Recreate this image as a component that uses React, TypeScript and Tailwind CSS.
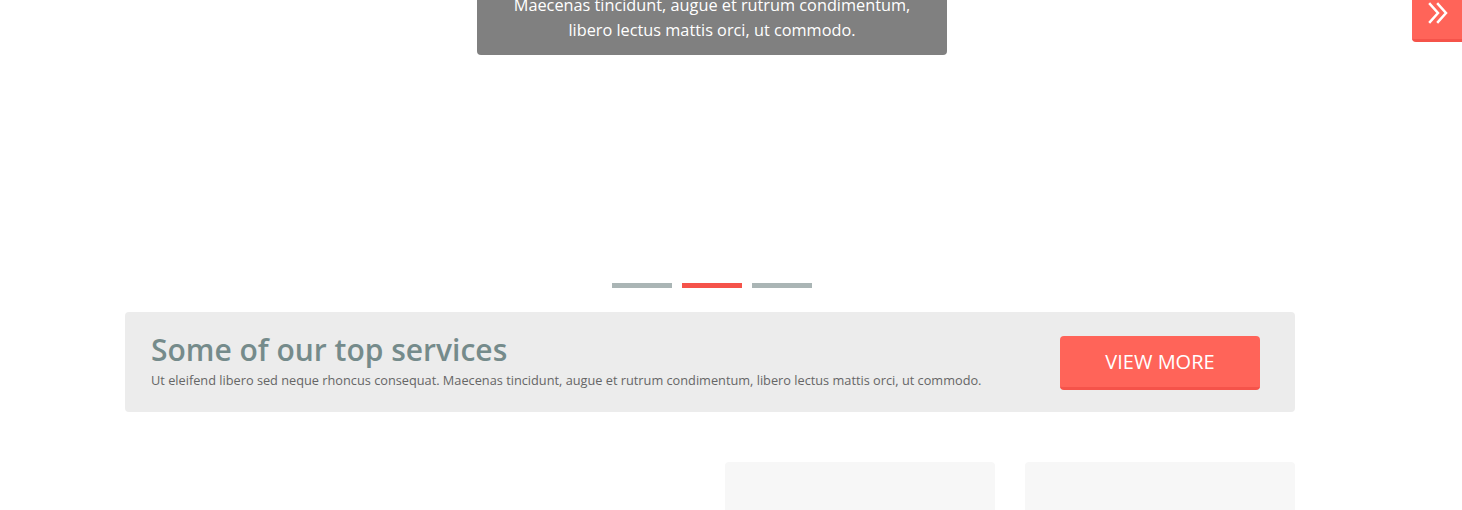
import React from "react";

export default function App() {
  return (
    <div className="relative w-[1462px] h-[510px] overflow-hidden bg-white" style={{ fontFamily: "'Open Sans', 'Noto Sans', sans-serif" }}>
      {/* side toggle */}
      <div className="absolute right-0 top-0 w-[50px] h-[42px] bg-[#ff6459] border-b-[3px] border-[#f5534a] rounded-bl-[4px]">
        <svg width="22" height="22" viewBox="0 0 22 22" fill="none" stroke="white" strokeWidth="2.5" strokeLinecap="square" className="absolute left-[15px] top-[2px]">
          <path d="M3 2l8 9-8 9" />
          <path d="M11 2l8 9-8 9" />
        </svg>
      </div>

      <div className="w-[1170px] ml-[125px] flex flex-col items-center">
        {/* caption */}
        <div className="w-[470px] ml-[4px] mt-[-7px] bg-[#808080] rounded-b-[4px] px-6 pb-[12px] text-center text-white text-[16.3px] leading-[25px]">
          <p>Maecenas tincidunt, augue et rutrum condimentum,</p>
          <p>libero lectus mattis orci, ut commodo.</p>
        </div>

        {/* dots */}
        <div className="mt-[228px] ml-[4px] flex gap-[10px]">
          <div className="w-[60px] h-[5px] bg-[#aab5b5]" />
          <div className="w-[60px] h-[5px] bg-[#f5534a]" />
          <div className="w-[60px] h-[5px] bg-[#aab5b5]" />
        </div>

        {/* services banner */}
        <div className="mt-[24px] w-full h-[100px] bg-[#ececec] rounded-[4px] flex items-center justify-between pl-[26px] pr-[35px]">
          <div className="flex flex-col">
            <h2 className="text-[30px] font-semibold leading-[38px] text-[#758b8b] mt-[-3px]">Some of our top services</h2>
            <p className="text-[12.75px] leading-[20px] text-[#666] mt-[1px]">Ut eleifend libero sed neque rhoncus consequat. Maecenas tincidunt, augue et rutrum condimentum, libero lectus mattis orci, ut commodo.</p>
          </div>
          <button className="w-[200px] h-[54px] mt-[2px] bg-[#ff6459] border-b-[3px] border-[#f5534a] rounded-[4px] text-white text-[20px] leading-none flex items-center justify-center">VIEW MORE</button>
        </div>

        {/* cards */}
        <div className="mt-[50px] w-full grid grid-cols-4 gap-[30px]">
          <div />
          <div />
          <div className="h-[60px] bg-[#f7f7f7] rounded-t-[4px]" />
          <div className="h-[60px] bg-[#f7f7f7] rounded-t-[4px]" />
        </div>
      </div>
    </div>
  );
}
